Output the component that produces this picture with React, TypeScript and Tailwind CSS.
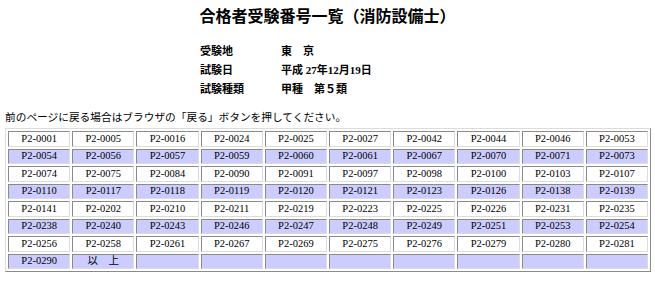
import React from 'react'

const rows: string[][] = [
  ['0001', '0005', '0016', '0024', '0025', '0027', '0042', '0044', '0046', '0053'],
  ['0054', '0056', '0057', '0059', '0060', '0061', '0067', '0070', '0071', '0073'],
  ['0074', '0075', '0084', '0090', '0091', '0097', '0098', '0100', '0103', '0107'],
  ['0110', '0117', '0118', '0119', '0120', '0121', '0123', '0126', '0138', '0139'],
  ['0141', '0202', '0210', '0211', '0219', '0223', '0225', '0226', '0231', '0235'],
  ['0238', '0240', '0243', '0246', '0247', '0248', '0249', '0251', '0253', '0254'],
  ['0256', '0258', '0261', '0267', '0269', '0275', '0276', '0279', '0280', '0281'],
  ['0290', '', '', '', '', '', '', '', '', '']
]

const info = [
  ['受験地', '東　京'],
  ['試験日', '平成 27年12月19日'],
  ['試験種類', '甲種　第５類']
]

export default function App() {
  return (
    <div className="w-[655px] h-[285px] bg-white text-black font-['Liberation_Serif','Noto_Sans_CJK_JP',serif]">
      {/* Title */}
      <h1 className="pt-[7px] text-center text-[16px] leading-[16px] font-bold font-['Noto_Sans_CJK_JP',sans-serif]">
        合格者受験番号一覧（消防設備士）
      </h1>

      {/* Exam info */}
      <div className="ml-[200px] mt-[19px] grid grid-cols-[81px_auto] text-[11px] leading-[19px] font-bold">
        {info.map(([label, value]) => (
          <React.Fragment key={label}>
            <div>{label}</div>
            <div>{value}</div>
          </React.Fragment>
        ))}
      </div>

      <p className="ml-[5px] mt-[12px] text-[10.7px] leading-[12px] font-['Noto_Sans_CJK_JP',sans-serif]">
        前のページに戻る場合はブラウザの「戻る」ボタンを押してください。
      </p>

      {/* Number table */}
      <div className="ml-[5px] mt-[5px] w-[646px] grid grid-cols-10 auto-rows-[15.5px] gap-[2px] p-[2px] border border-t-[#dcdcdc] border-l-[#dcdcdc] border-r-[#8a8a8a] border-b-[#8a8a8a] bg-white">
        {rows.map((row, i) =>
          row.map((num, j) => {
            const shaded = i % 2 === 1
            let label = num ? `P2-${num}` : ''
            if (i === 7 && j === 1) label = '以　上'
            return (
              <div
                key={`${i}-${j}`}
                className={`flex items-center justify-center text-[10.5px] leading-none border border-t-[#8a8a8a] border-l-[#8a8a8a] border-r-[#dcdcdc] border-b-[#dcdcdc] ${
                  shaded ? 'bg-[#ccccff]' : 'bg-white'
                }`}
              >
                {label}
              </div>
            )
          })
        )}
      </div>
    </div>
  )
}
